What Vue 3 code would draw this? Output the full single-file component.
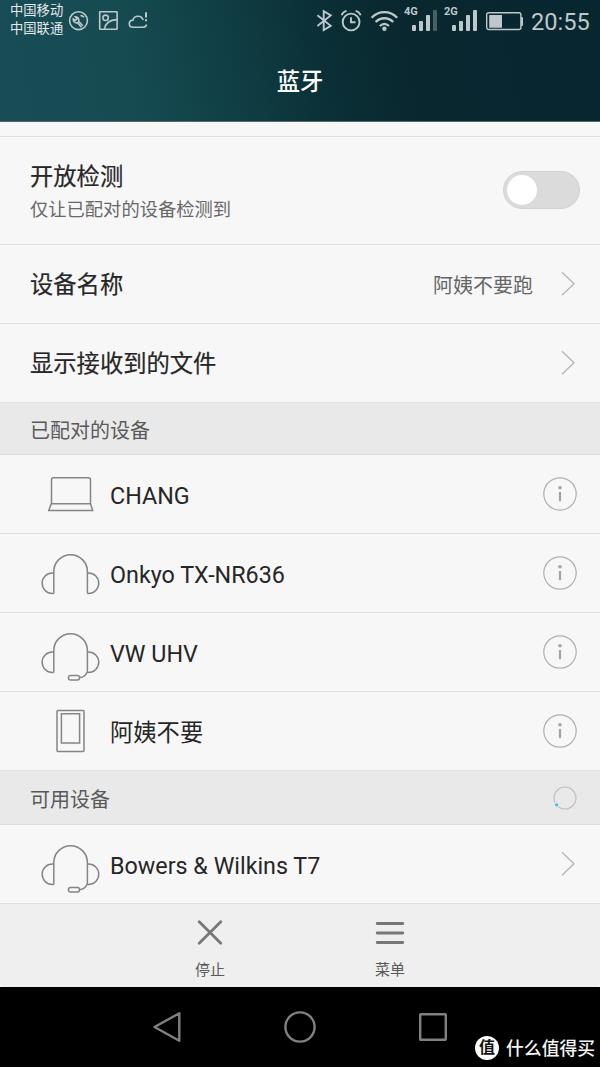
<script setup>
    import { ref } from "vue";

    const isVisible = ref(false);

    const pairedDevices = [
        { name: "CHANG", type: "laptop" },
        { name: "Onkyo TX-NR636", type: "headphones" },
        { name: "VW UHV", type: "headset" },
        { name: "阿姨不要", type: "phone" }
    ];
    const availableDevices = [
        { name: "Bowers & Wilkins T7", type: "headset" }
    ];

    // outlines on a 60x60 canvas
    const deviceIcons = {
        laptop: "M13.5 13.8h35a2 2 0 0 1 2 2v24h-39v-24a2 2 0 0 1 2-2M11.5 39.8h39l2.2 6.7H8.8l2.4-6.7",
        headphones: "M13.8 50.4V28.5a16.8 16.8 0 0 1 33.6 0v21.9M13.8 30.1h-1.5a10.1 10.1 0 0 0 0 20.3h1.5M47.4 30.1h1.2a10.1 10.1 0 0 1 0 20.3h-1.2",
        headset: "M13.8 50.4V28.5a16.8 16.8 0 0 1 33.6 0v21c-1.4 3.4-4 5.9-7.4 6M13.8 30.1h-1.5a10.1 10.1 0 0 0 0 20.3h1.5M47.4 30.1h1.2a10.1 10.1 0 0 1 0 20.3h-1.2M30.5 53.5h7a2 2 0 0 1 2 2v.6a2 2 0 0 1-2 2h-7a2 2 0 0 1-2-2v-.6a2 2 0 0 1 2-2z",
        phone: "M18 9.6h25a1 1 0 0 1 1 1v39a1 1 0 0 1-1 1H18a1 1 0 0 1-1-1v-39a1 1 0 0 1 1-1zM21.4 12.8h18.2v29.2H21.4z"
    };
</script>

<template>
    <div class="screen">
        <header class="header">
            <div class="status">
                <div class="carriers">
                    <span>中国移动</span>
                    <span>中国联通</span>
                </div>
                <svg class="notices" width="84" height="36" viewBox="66 0 84 36">
                    <g fill="none" stroke="currentColor" stroke-width="1.6">
                        <circle cx="78.5" cy="20.7" r="8.9" />
                        <path d="M82.8 25.8l-4.2-4.6c.9-2.5-.8-4.7-3.3-4.5l1.7 2-1.6 1.7-2.1-1.6c-.5 2.6 1.7 4.6 4.2 3.9l4 4.5M80.5 15.2l3.6 1.8" />
                        <rect x="99.7" y="11.7" width="17.4" height="17.6" rx="0.6" />
                        <circle cx="105.6" cy="17.8" r="2.7" />
                        <path d="M104.5 29c.8-5.2 5-9 12.3-9.4" />
                        <path d="M143.2 20.1c-.8-2.5-2.7-3.9-5.2-3.9-2.6 0-4.5 1.5-5 3.9-2.3.2-3.7 1.6-3.7 3.6 0 2.1 1.5 3.5 3.7 3.5h10c2.1 0 3.4-1.2 3.4-2.6" />
                        <path stroke-width="2" d="M146 12.3v5.1M146 19.2v2" />
                    </g>
                </svg>
                <div class="system">
                    <svg width="84" height="36" viewBox="316 0 84 36">
                        <g fill="none" stroke="currentColor" stroke-width="1.9">
                            <path d="M317.4 15.2l13.3 10.6-7 4.2V11.2l7 4.2-13.3 10.5" />
                            <circle cx="351.1" cy="22" r="8.4" />
                            <path d="M351 17.2v5h4.5M341.6 15.2c.8-2.2 2.4-3.8 4.9-4.4M360.6 15.2c-.8-2.2-2.4-3.8-4.9-4.4" />
                            <path stroke-width="2.3" d="M371.6 17.7c7.4-7.4 18.2-7.4 25.6 0M375.6 22c5.1-5 12.5-5 17.6 0M379.8 26c2.8-2.6 6.4-2.6 9.2 0" />
                        </g>
                        <circle cx="384.4" cy="28.8" r="2.2" fill="currentColor" />
                    </svg>
                    <div v-for="net in ['4G', '2G']" :key="net" class="signal" :class="{ weak: net === '4G' }">
                        <span>{{ net }}</span>
                        <i></i><i></i><i></i><i></i>
                    </div>
                    <svg class="battery" width="38" height="20" viewBox="0 0 38 20">
                        <rect x="0.7" y="1.7" width="34.2" height="16.8" rx="2" fill="none" stroke="currentColor" stroke-width="1.4" />
                        <path fill="currentColor" d="M3.2 4h12.8v12.7H3.2zM35 6h1.3l.7.8v7.5l-.7.8H35z" />
                    </svg>
                    <time>20:55</time>
                </div>
            </div>
            <h1>蓝牙</h1>
        </header>

        <main class="list">
            <div class="spacer"></div>
            <div class="row row-tall">
                <div class="texts">
                    <span class="title">开放检测</span>
                    <span class="hint">仅让已配对的设备检测到</span>
                </div>
                <button class="switch" :class="{ on: isVisible }" @click="isVisible = !isVisible"></button>
            </div>
            <div class="row">
                <span class="title">设备名称</span>
                <span class="value">阿姨不要跑</span>
                <svg class="arrow" width="14" height="26" viewBox="0 0 14 26">
                    <path d="M1 1.2l12 11.5L1 24.2" />
                </svg>
            </div>
            <div class="row">
                <span class="title">显示接收到的文件</span>
                <svg class="arrow" width="14" height="26" viewBox="0 0 14 26">
                    <path d="M1 1.2l12 11.5L1 24.2" />
                </svg>
            </div>

            <h2>已配对的设备</h2>
            <div v-for="device in pairedDevices" :key="device.name" class="row device">
                <svg class="device-icon" width="60" height="60" viewBox="0 0 60 60">
                    <path :d="deviceIcons[device.type]" />
                </svg>
                <span class="title">{{ device.name }}</span>
                <svg class="info" width="34" height="34" viewBox="0 0 34 34">
                    <circle cx="17" cy="17" r="16.2" fill="none" stroke="#b0b0b0" stroke-width="1.2" />
                    <circle cx="17" cy="10.8" r="1.8" fill="#a3a3a3" />
                    <path d="M17 15v9.2" stroke="#a3a3a3" stroke-width="2.2" />
                </svg>
            </div>

            <h2 class="available">
                可用设备
                <svg width="24" height="24" viewBox="0 0 24 24">
                    <circle cx="12" cy="12" r="11" fill="none" stroke="#c2c2c2" stroke-width="1.2" />
                    <circle cx="3.6" cy="18.8" r="2.6" fill="#e9e9e9" />
                    <circle cx="3.6" cy="18.8" r="1.6" fill="#35c5d2" />
                </svg>
            </h2>
            <div v-for="device in availableDevices" :key="device.name" class="row device">
                <svg class="device-icon" width="60" height="60" viewBox="0 0 60 60">
                    <path :d="deviceIcons[device.type]" />
                </svg>
                <span class="title">{{ device.name }}</span>
                <svg class="arrow" width="14" height="26" viewBox="0 0 14 26">
                    <path d="M1 1.2l12 11.5L1 24.2" />
                </svg>
            </div>
        </main>

        <div class="toolbar-wrapper">
            <div class="toolbar">
                <button>
                    <svg width="30" height="30" viewBox="0 0 30 30">
                        <path d="M4.2 3.7l21.6 21.6M25.8 3.7L4.2 25.3" />
                    </svg>
                    停止
                </button>
                <button>
                    <svg width="30" height="30" viewBox="0 0 30 30">
                        <path d="M2.2 5.5h25.6M2.2 15h25.6M2.2 24.5h25.6" />
                    </svg>
                    菜单
                </button>
            </div>
        </div>

        <nav class="nav">
            <svg width="34" height="34" viewBox="0 0 34 34">
                <path d="M29.3 3.3v27.4L4.5 17z" />
            </svg>
            <svg width="34" height="34" viewBox="0 0 34 34">
                <circle cx="17" cy="17" r="14.6" />
            </svg>
            <svg width="34" height="34" viewBox="0 0 34 34">
                <rect x="4.2" y="4.2" width="25.6" height="25.6" rx="0.5" />
            </svg>
            <div class="watermark">
                <span class="badge">值</span>
                <span class="site">什么值得买</span>
            </div>
        </nav>
    </div>
</template>

<style>
    body {
        margin: 0;
    }
</style>

<style scoped>
    .screen {
        display: flex;
        flex-direction: column;
        width: 600px;
        height: 1067px;
        overflow: hidden;
        background-color: #f7f7f7;
        font-family: Roboto, "Noto Sans CJK SC", sans-serif;
        color: #262626;
    }
    svg {
        display: block;
        flex: none;
    }
    button {
        border: none;
        padding: 0;
        background: none;
        font: inherit;
        color: inherit;
    }

    .header {
        box-sizing: border-box;
        height: 122px;
        border-bottom: 1px solid #506c73;
        background: linear-gradient(80deg, #184d56 0%, #164b52 22%, #103f45 38%, #0b3037 53%, #09272f 68%, #082630 100%);
    }
    .status {
        display: flex;
        height: 40px;
        color: #bdc8ca;
    }
    .carriers {
        display: flex;
        flex-direction: column;
        width: 56px;
        padding: 2px 0 0 10px;
        font-size: 13.3px;
        line-height: 18px;
        color: #e4e9ea;
    }
    .system {
        display: flex;
        align-items: flex-start;
        margin-left: auto;
        padding-right: 10px;
    }
    .signal {
        display: flex;
        align-items: flex-end;
        gap: 3px;
        position: relative;
        width: 28px;
        height: 31px;
        padding-left: 12px;
    }
    .signal span {
        position: absolute;
        left: 4px;
        top: 5px;
        font: 700 11px/13px Roboto, sans-serif;
    }
    .signal i {
        width: 4px;
        height: 6px;
        border-radius: 1px;
        background-color: currentColor;
    }
    .signal i:nth-of-type(2) {
        height: 10px;
    }
    .signal i:nth-of-type(3) {
        height: 16px;
    }
    .signal i:nth-of-type(4) {
        height: 21px;
    }
    .signal.weak i:nth-of-type(4) {
        opacity: 0.35;
    }
    .battery {
        margin: 11px 7px 0 6px;
    }
    time {
        width: 59px;
        font-size: 23.6px;
        line-height: 44px;
        white-space: nowrap;
    }
    h1 {
        margin: 0;
        font-size: 23.3px;
        font-weight: 500;
        line-height: 84px;
        text-align: center;
        color: #fff;
    }

    .list {
        height: 782px;
    }
    .spacer {
        height: 14px;
        border-bottom: 1px solid #e0e0e0;
    }
    .row {
        box-sizing: border-box;
        display: flex;
        align-items: center;
        height: 79px;
        padding: 0 25px 0 30px;
        border-bottom: 1px solid #e0e0e0;
    }
    .row-tall {
        height: 108px;
        padding-right: 20px;
    }
    .texts {
        display: flex;
        flex-direction: column;
        gap: 1px;
        padding-top: 2px;
    }
    .title {
        padding-top: 2px;
        font-size: 23.3px;
        line-height: 34px;
        -webkit-text-stroke: 0.2px currentColor;
    }
    .hint {
        font-size: 18.3px;
        line-height: 30px;
        color: #686868;
    }
    .value {
        margin-left: auto;
        font-size: 20px;
        color: #666;
    }
    .arrow {
        margin-left: auto;
        fill: none;
        stroke: #b5b5b5;
        stroke-width: 1.3;
    }
    .value + .arrow {
        margin-left: 28px;
    }
    .switch {
        box-sizing: border-box;
        display: flex;
        width: 77px;
        height: 38px;
        margin: 0 0 1px auto;
        padding: 3px;
        border: 1px solid #d2d2d2;
        border-radius: 19px;
        background-color: #dbdbdb;
    }
    .switch::before {
        content: "";
        width: 30px;
        height: 30px;
        border-radius: 50%;
        background-color: #fff;
    }
    .switch.on {
        justify-content: flex-end;
        background-color: #35c5d2;
    }
    h2 {
        box-sizing: border-box;
        display: flex;
        align-items: center;
        justify-content: space-between;
        height: 52px;
        margin: 0;
        padding: 1px 23px 0 30px;
        border-bottom: 1px solid #dcdcdc;
        background-color: #e9e9e9;
        font-size: 20px;
        font-weight: 400;
        color: #5a5a5a;
    }
    .available {
        height: 54px;
    }
    .device {
        padding: 0 23px 0 40px;
    }
    .device .title {
        padding-top: 3px;
        margin-left: 10px;
        -webkit-text-stroke: 0;
    }
    .device-icon path {
        fill: none;
        stroke: #858585;
        stroke-width: 1.5;
    }
    .info {
        margin-left: auto;
    }
    .device .arrow {
        margin-right: 2px;
    }

    .toolbar-wrapper {
        height: 83px;
        background-color: #f7f7f7;
    }
    .toolbar {
        box-sizing: border-box;
        display: flex;
        justify-content: center;
        gap: 120px;
        height: 83px;
        padding-top: 14px;
        border-radius: 0 0 5px 5px;
        background-color: #efefef;
    }
    .toolbar button {
        display: flex;
        flex-direction: column;
        align-items: center;
        width: 60px;
        font-size: 15px;
        line-height: 22px;
        gap: 11px;
        color: #5a5a5a;
    }
    .toolbar path {
        stroke: #777;
        stroke-width: 2.8;
        stroke-linecap: round;
    }

    .nav {
        position: relative;
        display: flex;
        justify-content: center;
        gap: 99px;
        height: 57px;
        padding-top: 23px;
        background-color: #000;
    }
    .nav svg {
        fill: none;
        stroke: #808080;
        stroke-width: 2.4;
        stroke-linejoin: round;
    }
    .watermark {
        position: absolute;
        right: 5px;
        bottom: 6px;
        display: flex;
        align-items: center;
        gap: 7px;
        font-size: 17.8px;
        line-height: 24px;
        color: #f5f5f5;
    }
    .site {
        padding-top: 2px;
        font-weight: 500;
    }
    .badge {
        width: 24px;
        height: 24px;
        border-radius: 50%;
        background-color: #fff;
        font-size: 16px;
        font-weight: 700;
        line-height: 23px;
        text-align: center;
        color: #111;
    }
</style>
